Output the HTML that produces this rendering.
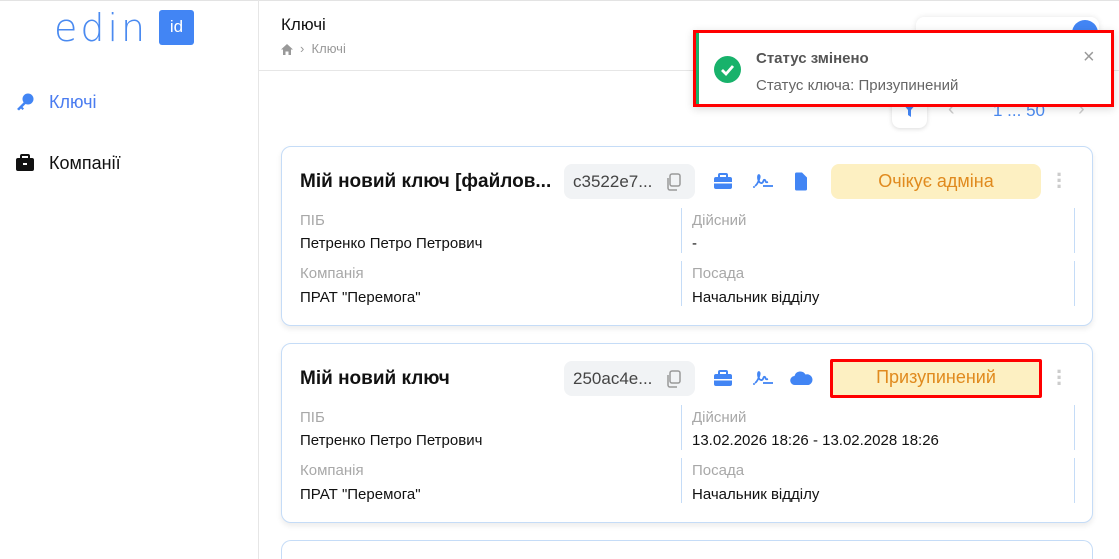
<!DOCTYPE html>
<html style="width:1119px;height:559px;overflow:hidden"><head><meta charset="utf-8"><style>
*{margin:0;padding:0;box-sizing:border-box}
body{width:1119px;height:559px;overflow:hidden;background:#fff;font-family:"Liberation Sans","DejaVu Sans",sans-serif;position:relative;color:#111}
.a{position:absolute}
.card{position:absolute;left:281px;width:812px;height:180px;border:1px solid #c5dcf7;border-radius:10px;background:#fff;box-shadow:0 3px 6px rgba(0,0,0,.08)}
.title{position:absolute;left:18px;top:24px;font-weight:bold;font-size:19px;color:#111}
.chip{position:absolute;left:282px;top:17px;width:131px;height:35px;background:#f1f3f5;border-radius:8px;font-size:17px;color:#444;padding:8px 0 0 9px}
.badge{position:absolute;left:549px;top:17px;width:210px;height:35px;background:#fdf0c2;border-radius:8px;font-size:18px;color:#e08a1e;text-align:center;line-height:35px}
.lbl{position:absolute;font-size:15px;color:#a8a8a8}
.val{position:absolute;font-size:15px;color:#111}
.vd{position:absolute;width:1px;background:#c5dcf7}
</style></head><body>
<div class="a" style="left:0;top:0;width:1119px;height:1px;background:#e3e3e3"></div>
<div class="a" style="left:258px;top:0;width:1px;height:559px;background:#e6e6e6"></div>
<div class="a" style="left:259px;top:70px;width:860px;height:1px;background:#e6e6e6"></div>
<!-- logo -->
<div class="a" style="left:54px;top:8px;font-size:38px;color:#4a8af0;letter-spacing:3px;line-height:40px;font-family:'DejaVu Sans',sans-serif;font-weight:200">edin</div>
<div class="a" style="left:159px;top:10px;width:35px;height:35px;background:#4285f4;border-radius:3px;color:#fff;font-size:17px;text-align:center;line-height:34px">id</div>
<!-- sidebar -->
<svg class="a" style="left:15px;top:93px" width="20" height="18" viewBox="0 0 20 18"><circle cx="13" cy="6" r="5.5" fill="#4285f4"/><path d="M9 9 L2 16 L4 17.5 L6 15.5 L7.5 17 L9 15.5 L7.5 14 L11 10.5Z" fill="#4285f4"/></svg>
<div class="a" style="left:49px;top:92px;font-size:18px;color:#4a7cf0">Ключі</div>
<svg class="a" style="left:15px;top:154px" width="20" height="18" viewBox="0 0 20 18"><rect x="6" y="1" width="8" height="4" rx="1" fill="none" stroke="#111" stroke-width="2"/><rect x="1" y="4" width="18" height="13" rx="2" fill="#111"/><rect x="8" y="9" width="4" height="2" fill="#fff"/></svg>
<div class="a" style="left:49px;top:153px;font-size:18px;color:#111">Компанії</div>
<!-- header -->
<div class="a" style="left:281px;top:15px;font-size:17px;color:#111">Ключі</div>
<svg class="a" style="left:281px;top:44px" width="12" height="11" viewBox="0 0 12 11"><path d="M6 0 L12 5.5 L10 5.5 L10 11 L7.5 11 L7.5 7.5 L4.5 7.5 L4.5 11 L2 11 L2 5.5 L0 5.5Z" fill="#999"/></svg>
<div class="a" style="left:300px;top:41px;font-size:13px;color:#999">›&nbsp; Ключі</div>
<div class="a" style="left:916px;top:17px;width:183px;height:40px;border-radius:8px;background:#fff;box-shadow:0 0 6px rgba(0,0,0,.1)"></div>
<div class="a" style="left:1072px;top:20px;width:26px;height:26px;border-radius:50%;background:#4285f4"></div>
<!-- filter/pagination -->
<div class="a" style="left:892px;top:96px;width:35px;height:32px;border-radius:8px;background:#fff;box-shadow:0 1px 5px rgba(0,0,0,.15)"></div>
<svg class="a" style="left:903px;top:104px" width="13" height="14" viewBox="0 0 13 14"><path d="M0 0 H13 L8 6 V13 L5 11 V6Z" fill="#4285f4"/></svg>
<div class="a" style="left:948px;top:98px;font-size:20px;color:#ccc">‹</div>
<div class="a" style="left:993px;top:101px;font-size:17px;color:#4a8af0">1 ... 50</div>
<div class="a" style="left:1078px;top:98px;font-size:20px;color:#ccc">›</div>
<!-- card 1 -->
<div class="card" style="top:146px">
<div class="title">Мій новий ключ [файлов...</div>
<div class="chip">c3522e7...</div>
<svg class="a" style="left:384px;top:26px" width="16" height="18" viewBox="0 0 16 18"><rect x="4" y="1" width="10" height="12" rx="2" fill="none" stroke="#999" stroke-width="1.5"/><path d="M2 5 V15 a2 2 0 0 0 2 2 H11" fill="none" stroke="#999" stroke-width="1.5"/></svg>
<svg class="a" style="left:431px;top:26px" width="20" height="17" viewBox="0 0 20 17"><rect x="6" y="1" width="8" height="4" rx="1" fill="none" stroke="#4285f4" stroke-width="2"/><rect x="1" y="4" width="18" height="12" rx="2" fill="#4285f4"/><rect x="1" y="9" width="18" height="1.5" fill="#fff"/></svg>
<svg class="a" style="left:470px;top:25px" width="22" height="18" viewBox="0 0 22 18"><path d="M3 14 C6 12 9 4 7 3 C5 3 6 12 10 11 C12 10 11 7 13 8 C14 9 13 11 16 10" fill="none" stroke="#4285f4" stroke-width="1.8"/><path d="M11 14 H21" stroke="#4285f4" stroke-width="1.8"/><circle cx="2" cy="15" r="1" fill="#4285f4"/></svg>
<svg class="a" style="left:512px;top:25px" width="14" height="19" viewBox="0 0 14 19"><path d="M1 2 a1.5 1.5 0 0 1 1.5-1.5 H8 L13 5.5 V17 a1.5 1.5 0 0 1-1.5 1.5 H2.5 A1.5 1.5 0 0 1 1 17Z" fill="#4285f4"/></svg>
<div class="badge">Очікує адміна</div>
<div class="a" style="left:774px;top:25px;width:4px;line-height:6px;color:#ccc;font-size:22px;font-weight:bold">·<br>·<br>·</div>
<div class="lbl" style="left:18px;top:65px">ПІБ</div><div class="val" style="left:18px;top:88px">Петренко Петро Петрович</div>
<div class="lbl" style="left:18px;top:118px">Компанія</div><div class="val" style="left:18px;top:142px">ПРАТ "Перемога"</div>
<div class="vd" style="left:399px;top:61px;height:45px"></div><div class="vd" style="left:399px;top:114px;height:45px"></div>
<div class="vd" style="left:792px;top:61px;height:45px"></div><div class="vd" style="left:792px;top:114px;height:45px"></div>
<div class="lbl" style="left:410px;top:65px">Дійсний</div><div class="val" style="left:410px;top:88px">-</div>
<div class="lbl" style="left:410px;top:118px">Посада</div><div class="val" style="left:410px;top:142px">Начальник відділу</div>
</div>
<!-- card 2 -->
<div class="card" style="top:343px">
<div class="title">Мій новий ключ</div>
<div class="chip">250ac4e...</div>
<svg class="a" style="left:384px;top:26px" width="16" height="18" viewBox="0 0 16 18"><rect x="4" y="1" width="10" height="12" rx="2" fill="none" stroke="#999" stroke-width="1.5"/><path d="M2 5 V15 a2 2 0 0 0 2 2 H11" fill="none" stroke="#999" stroke-width="1.5"/></svg>
<svg class="a" style="left:431px;top:26px" width="20" height="17" viewBox="0 0 20 17"><rect x="6" y="1" width="8" height="4" rx="1" fill="none" stroke="#4285f4" stroke-width="2"/><rect x="1" y="4" width="18" height="12" rx="2" fill="#4285f4"/><rect x="1" y="9" width="18" height="1.5" fill="#fff"/></svg>
<svg class="a" style="left:470px;top:25px" width="22" height="18" viewBox="0 0 22 18"><path d="M3 14 C6 12 9 4 7 3 C5 3 6 12 10 11 C12 10 11 7 13 8 C14 9 13 11 16 10" fill="none" stroke="#4285f4" stroke-width="1.8"/><path d="M11 14 H21" stroke="#4285f4" stroke-width="1.8"/><circle cx="2" cy="15" r="1" fill="#4285f4"/></svg>
<svg class="a" style="left:508px;top:26px" width="23" height="16" viewBox="0 0 23 16"><path d="M5 15 a4.5 4.5 0 0 1-0.5-9 a6 6 0 0 1 11-1.5 a5 5 0 0 1 3 10.5Z" fill="#4285f4"/></svg>
<div class="badge" style="border:3px solid #f00;border-radius:2px;line-height:31px;left:548px;width:212px;top:15px;height:39px">Призупинений</div>
<div class="a" style="left:774px;top:25px;width:4px;line-height:6px;color:#ccc;font-size:22px;font-weight:bold">·<br>·<br>·</div>
<div class="lbl" style="left:18px;top:65px">ПІБ</div><div class="val" style="left:18px;top:88px">Петренко Петро Петрович</div>
<div class="lbl" style="left:18px;top:118px">Компанія</div><div class="val" style="left:18px;top:142px">ПРАТ "Перемога"</div>
<div class="vd" style="left:399px;top:61px;height:45px"></div><div class="vd" style="left:399px;top:114px;height:45px"></div>
<div class="vd" style="left:792px;top:61px;height:45px"></div><div class="vd" style="left:792px;top:114px;height:45px"></div>
<div class="lbl" style="left:410px;top:65px">Дійсний</div><div class="val" style="left:410px;top:88px">13.02.2026 18:26 - 13.02.2028 18:26</div>
<div class="lbl" style="left:410px;top:118px">Посада</div><div class="val" style="left:410px;top:142px">Начальник відділу</div>
</div>
<div class="card" style="top:540px;height:19px;border-bottom:none;border-radius:10px 10px 0 0;box-shadow:none"></div>
<!-- toast -->
<div class="a" style="left:693px;top:30px;width:421px;height:77px;border:3px solid #f00;background:#fff;box-shadow:0 2px 8px rgba(0,0,0,.15)">
<div class="a" style="left:0;top:0;width:3px;height:71px;background:#18b26b"></div>
<svg class="a" style="left:18px;top:23px" width="27" height="27" viewBox="0 0 27 27"><circle cx="13.5" cy="13.5" r="13.5" fill="#18b26b"/><path d="M8 14 L12 18 L19 10" fill="none" stroke="#fff" stroke-width="2.8"/></svg>
<div class="a" style="left:60px;top:17px;font-size:15px;font-weight:bold;color:#555">Статус змінено</div>
<div class="a" style="left:60px;top:44px;font-size:15px;color:#666">Статус ключа: Призупинений</div>
<div class="a" style="left:387px;top:13px;font-size:20px;color:#999">×</div>
</div>
</body></html>
